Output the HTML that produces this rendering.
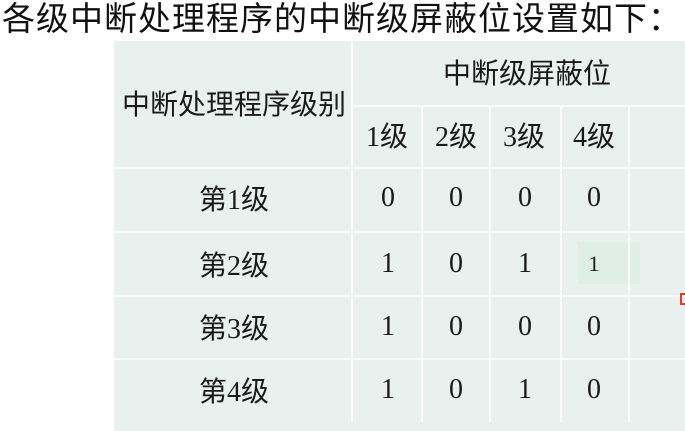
<!DOCTYPE html>
<html><head><meta charset="utf-8"><style>
body{margin:0;width:685px;height:422px;background:#fff;position:relative;overflow:hidden}
.t{position:absolute;left:2px;top:-8px;font:33px "Liberation Sans","Noto Sans CJK SC",sans-serif;white-space:nowrap;color:#111;letter-spacing:1px}
.tb{position:absolute;left:114px;top:41px;width:580px;height:390px;background:#e8f1ed}
.v,.h{position:absolute;background:#fafcfb}
.v{width:2px}
.h{height:2px}
.c{position:absolute;font:28px "Liberation Serif","Noto Serif CJK SC",serif;color:#1a1a1a;transform:translate(-50%,-50%);white-space:nowrap}
.k{font-family:"Liberation Serif","Noto Sans CJK SC",sans-serif}
</style></head><body>
<div class="t">各级中断处理程序的中断级屏蔽位设置如下：</div>
<div class="tb"></div>
<div style="position:absolute;left:578px;top:242px;width:62px;height:42px;background:#e0eee8"></div>
<div class="v" style="left:351px;top:41px;height:381px"></div>
<div class="v" style="left:421px;top:106px;height:316px"></div>
<div class="v" style="left:489px;top:106px;height:316px"></div>
<div class="v" style="left:560px;top:106px;height:316px"></div>
<div class="v" style="left:628px;top:106px;height:316px"></div>
<div class="h" style="left:352px;top:105px;width:340px"></div>
<div class="h" style="left:114px;top:167px;width:580px"></div>
<div class="h" style="left:114px;top:231px;width:580px"></div>
<div class="h" style="left:114px;top:295px;width:580px"></div>
<div class="h" style="left:114px;top:358px;width:580px"></div>
<div class="c k" style="left:234px;top:103px">中断处理程序级别</div>
<div class="c k" style="left:527px;top:72px">中断级屏蔽位</div>
<div class="c k" style="left:387px;top:135px">1级</div>
<div class="c k" style="left:456px;top:135px">2级</div>
<div class="c k" style="left:524px;top:135px">3级</div>
<div class="c k" style="left:594px;top:135px">4级</div>
<div class="c k" style="left:234px;top:198px">第1级</div>
<div class="c k" style="left:234px;top:264px">第2级</div>
<div class="c k" style="left:234px;top:327px">第3级</div>
<div class="c k" style="left:234px;top:390px">第4级</div>
<div class="c" style="left:388px;top:198px">0</div><div class="c" style="left:456px;top:198px">0</div><div class="c" style="left:525px;top:198px">0</div><div class="c" style="left:594px;top:198px">0</div>
<div class="c" style="left:388px;top:264px">1</div><div class="c" style="left:456px;top:264px">0</div><div class="c" style="left:525px;top:264px">1</div><div class="c" style="left:594px;top:264px;font-size:22px">1</div>
<div class="c" style="left:388px;top:327px">1</div><div class="c" style="left:456px;top:327px">0</div><div class="c" style="left:525px;top:327px">0</div><div class="c" style="left:594px;top:327px">0</div>
<div class="c" style="left:388px;top:390px">1</div><div class="c" style="left:456px;top:390px">0</div><div class="c" style="left:525px;top:390px">1</div><div class="c" style="left:594px;top:390px">0</div>
<div style="position:absolute;left:680px;top:293px;width:6px;height:12px;border:2px solid #e33;border-right:none;box-sizing:border-box"></div>
</body></html>
